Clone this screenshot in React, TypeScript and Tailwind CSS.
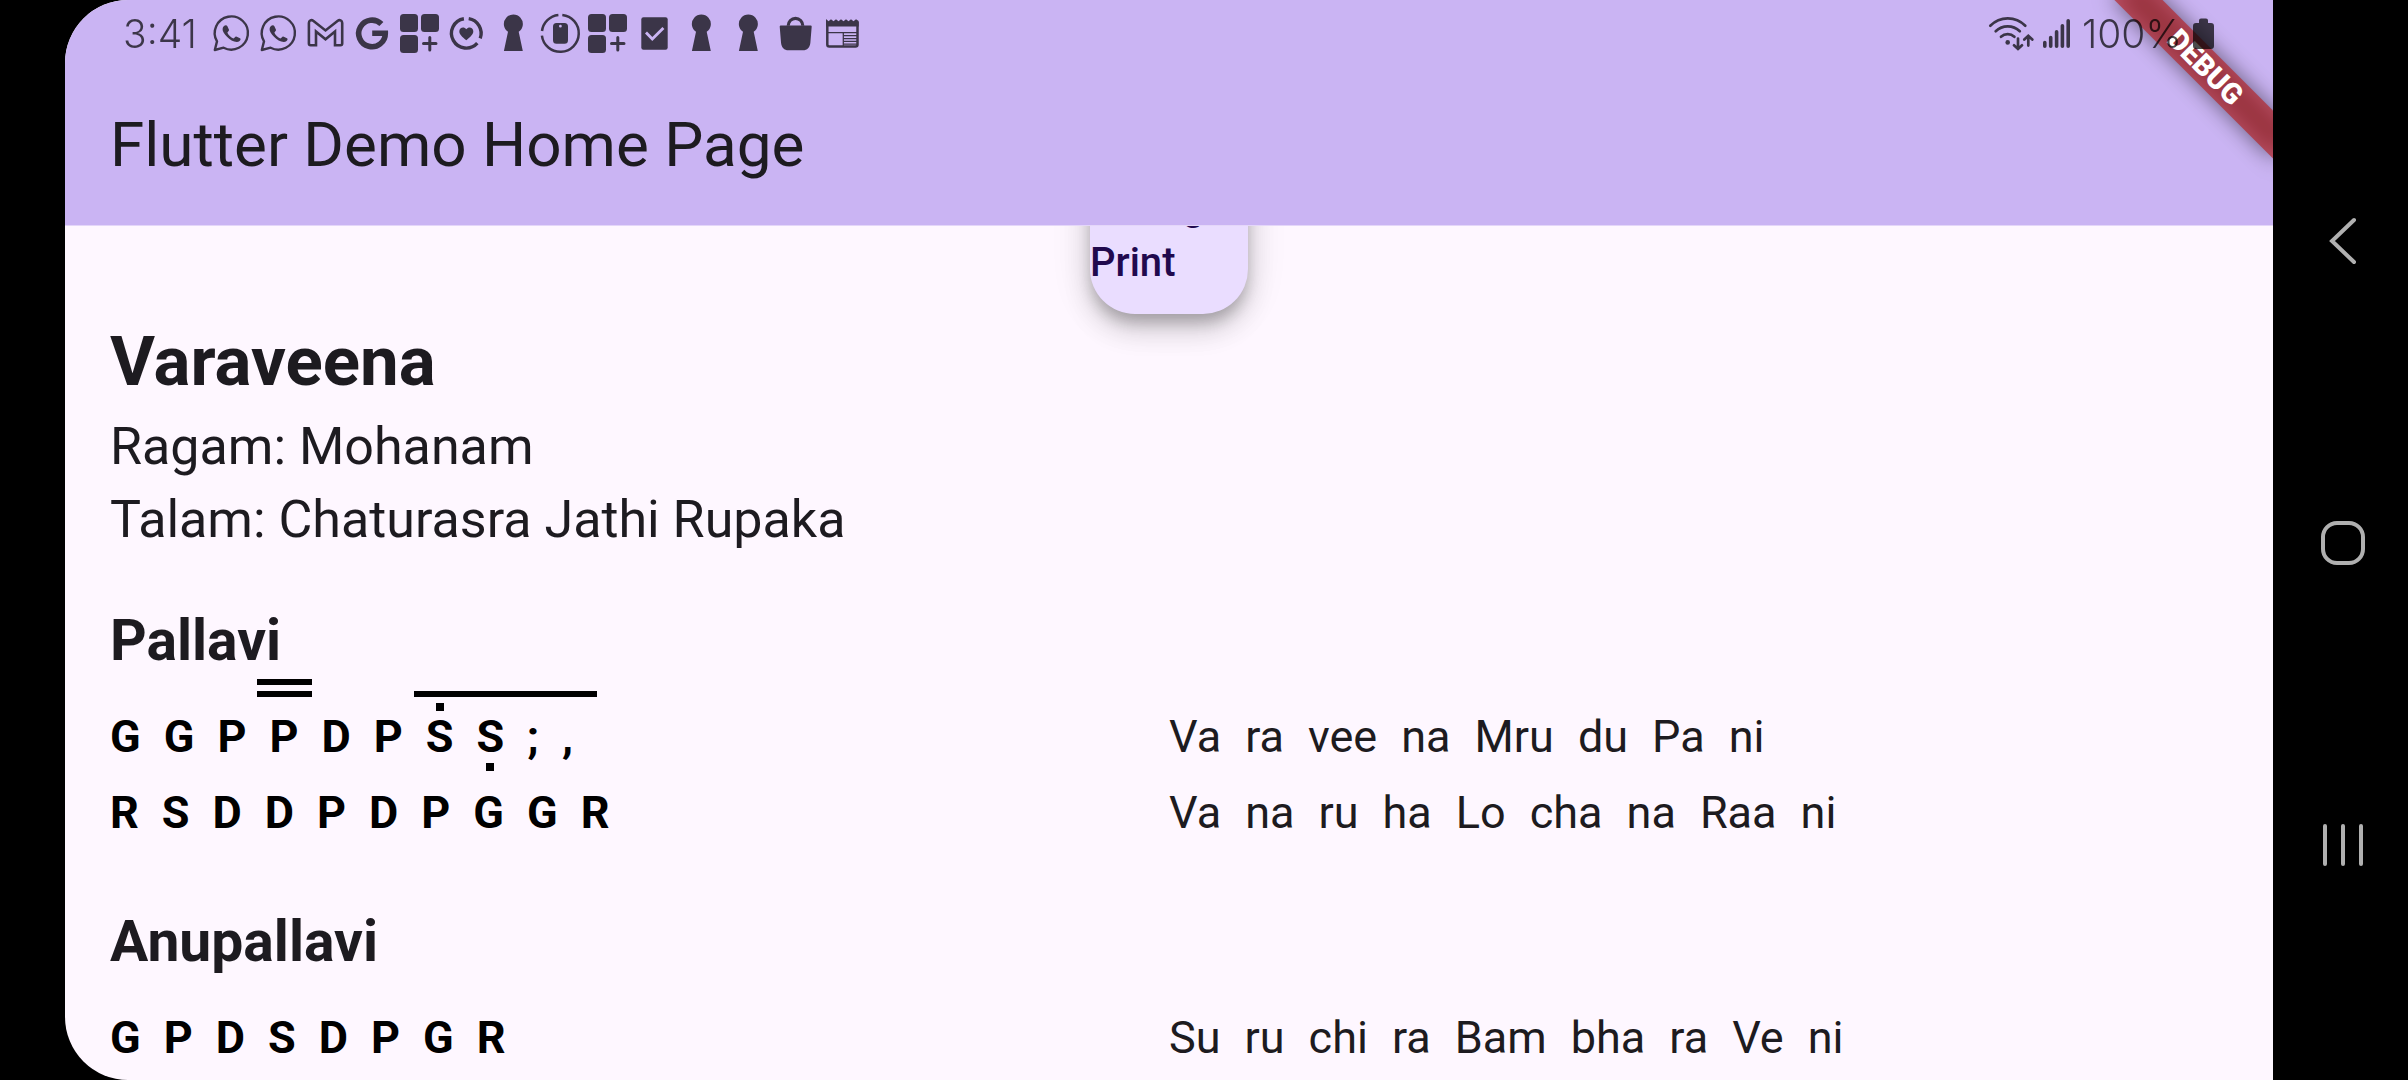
import type { ReactNode } from 'react';

function StatusIcon({ label, children }: { label: string; children: ReactNode }) {
  return (
    <svg viewBox="0 0 47 47" className="size-[47px]" fill="currentColor" role="img" aria-label={label}>
      {children}
    </svg>
  );
}

const WhatsApp = () => (
  <StatusIcon label="WhatsApp">
    <path
      d="M6.8 40 L9 31.4 A16.6 16.6 0 1 1 15.6 37.7 Z"
      fill="none"
      stroke="currentColor"
      strokeWidth="2.4"
      strokeLinejoin="round"
    />
    <path d="M16 16 C17.2 14.9 18.8 15 19.4 16.2 L21 19.8 C21.4 20.7 19.6 22 19.4 22.8 C20.4 25.2 22.8 27.4 25.4 28.4 C26.4 28.2 27.2 26.2 28.2 26.4 L32 28.2 C33 28.8 32.6 30.2 31.6 31 C29.6 32.6 26.4 31.8 23.6 30.4 C20.2 28.6 17.4 25.6 15.6 22.6 C14.2 20 14.2 17.6 16 16 Z" />
  </StatusIcon>
);

const Gmail = () => (
  <StatusIcon label="Gmail">
    <path
      d="M8.6 35.2 A1.7 1.7 0 0 1 6.9 33.5 V13 C6.9 10.2 9.4 9.4 11.2 10.8 L23.5 20.4 L35.8 10.8 C37.6 9.4 40.2 10.2 40.2 13 V33.5 A1.7 1.7 0 0 1 38.5 35.2 H33 V21.4 L23.5 29.2 L14 21.4 V35.2 Z"
      fill="none"
      stroke="currentColor"
      strokeWidth="2.6"
    />
  </StatusIcon>
);

const Google = () => (
  <StatusIcon label="Google">
    <path
      d="M32.4 14 A13.3 13.3 0 1 0 36.3 23.2 H23.2"
      fill="none"
      stroke="currentColor"
      strokeWidth="5.6"
    />
  </StatusIcon>
);

const Widgets = () => (
  <StatusIcon label="Widgets">
    <rect x="4" y="4" width="18" height="18" rx="3.5" />
    <rect x="25" y="4" width="18" height="18" rx="3.5" />
    <rect x="4" y="25" width="18" height="18" rx="3.5" />
    <path d="M33.8 27.5 V40 M27.5 33.6 H40" stroke="currentColor" strokeWidth="3" strokeLinecap="round" />
  </StatusIcon>
);

const Health = () => (
  <StatusIcon label="Health">
    <path
      d="M25.7 8.6 A14.8 14.8 0 0 1 37.2 28.4 M34.3 33.2 A14.8 14.8 0 1 1 20.9 8.7"
      fill="none"
      stroke="currentColor"
      strokeWidth="3.4"
    />
    <path d="M23.3 30.2 C19 26.8 16.3 24.4 16.3 21.3 C16.3 17.4 21 16 23.3 19.2 C25.6 16 30.3 17.4 30.3 21.3 C30.3 24.4 27.6 26.8 23.3 30.2 Z" />
  </StatusIcon>
);

const Keyhole = () => (
  <StatusIcon label="Keyhole">
    <path d="M18 21.8 A9.5 9.5 0 1 1 28.7 21.8 L32.8 41 H13.9 Z" />
  </StatusIcon>
);

const DeviceCare = () => (
  <StatusIcon label="Device care">
    <path
      d="M25.3 4.9 A18.5 18.5 0 1 1 4.9 25.6 M5 21 A18.5 18.5 0 0 1 21.4 4.9"
      fill="none"
      stroke="currentColor"
      strokeWidth="2.5"
    />
    <path
      fillRule="evenodd"
      d="M19.5 13 H27.5 A3.5 3.5 0 0 1 31 16.5 V30.3 A3.5 3.5 0 0 1 27.5 33.8 H19.5 A3.5 3.5 0 0 1 16 30.3 V16.5 A3.5 3.5 0 0 1 19.5 13 Z M23.4 14.8 A1.4 1.4 0 1 0 23.4 17.6 A1.4 1.4 0 1 0 23.4 14.8 Z"
    />
  </StatusIcon>
);

const Task = () => (
  <StatusIcon label="Task">
    <mask id="task-check">
      <rect width="47" height="47" fill="white" />
      <path d="M15 22.6 L21.3 29 L32.4 18" fill="none" stroke="black" strokeWidth="2.8" />
    </mask>
    <rect x="10.3" y="7.3" width="26.4" height="32.4" rx="2.2" mask="url(#task-check)" />
  </StatusIcon>
);

const Bag = () => (
  <StatusIcon label="Shopping">
    <path d="M7.7 16.4 Q7.7 15.4 8.7 15.4 H38.7 Q39.7 15.4 39.7 16.4 L38.4 32.5 C38 37.6 35.2 40.3 31 40.3 H16.5 C12.2 40.3 9.4 37.6 9 32.5 Z" />
    <path d="M16.2 15.8 A7.3 7.5 0 0 1 30.8 15.8" fill="none" stroke="currentColor" strokeWidth="3.2" />
  </StatusIcon>
);

const News = () => (
  <StatusIcon label="News">
    <path d="M7 9 L9.5 11.2 L12 9.2 L14.5 11.2 L17 9.2 L19.5 11.2 L22 9.2 L24.5 11.2 L27 9.2 L29.5 11.2 L32 9.2 L34.5 11.2 L37 9.2 L39.7 11 V16.4 H7 Z" />
    <path
      d="M8.3 12 V34.6 Q8.3 36.6 10.3 36.6 H36.5 Q38.5 36.6 38.5 34.6 V12"
      fill="none"
      stroke="currentColor"
      strokeWidth="2.5"
    />
    <path
      d="M8 22.6 H39 M24.3 22.6 V36 M24.3 25.7 H38 M24.3 28.6 H38 M24.3 31.4 H38 M24.3 34.2 H38"
      fill="none"
      stroke="currentColor"
      strokeWidth="1.3"
    />
  </StatusIcon>
);

function StatusBar() {
  return (
    <div className="absolute inset-x-0 top-0 z-20 flex h-[67px] items-center pl-[58px] pr-[59px] text-black opacity-70">
      <time className="w-[85px] font-['Inter',sans-serif] text-[39px] leading-none font-light">3:41</time>
      <div className="flex">
        <WhatsApp />
        <WhatsApp />
        <Gmail />
        <Google />
        <Widgets />
        <Health />
        <Keyhole />
        <DeviceCare />
        <Widgets />
        <Task />
        <Keyhole />
        <Keyhole />
        <Bag />
        <News />
      </div>
      <div className="ml-auto flex items-center">
        <svg
          viewBox="0 0 46 36"
          className="h-9 w-[46px]"
          fill="none"
          stroke="currentColor"
          strokeWidth="2.7"
          strokeLinecap="round"
          role="img"
          aria-label="Wi-Fi"
        >
          <path d="M2.3 9.7 C12 -.2 27.6 -.2 37.3 9.7 M7.7 15.3 C14.4 8.6 25 8.6 31.8 15.3 M13 20.8 C16.8 17.2 22.6 17.2 26.4 20.8" />
          <path d="M30 22.5 V32.6 M26 29.3 L30 33 L34 29.3 M40.3 29.6 V20 M36.3 23.6 L40.3 19.8 L44.3 23.6" />
          <circle cx="19.7" cy="26.4" r="2.3" fill="currentColor" stroke="none" />
        </svg>
        <svg
          viewBox="0 0 28 36"
          className="ml-2 h-9 w-7"
          stroke="currentColor"
          strokeWidth="3.6"
          strokeLinecap="round"
          role="img"
          aria-label="Signal"
        >
          <path d="M2.8 26.5 V30.2 M8.7 21.5 V30.2 M14.6 15.8 V30.2 M20.4 9.8 V30.2 M26.2 4.8 V30.2" />
        </svg>
        <span className="ml-3 font-['Inter',sans-serif] text-[39px] leading-none font-light">100%</span>
        <svg viewBox="0 0 21 32" className="ml-[11px] h-8 w-[21px]" fill="currentColor" role="img" aria-label="Battery">
          <path d="M6 5 V2.5 Q6 .5 8 .5 H13 Q15 .5 15 2.5 V5 H18 Q21 5 21 8 V28 Q21 31 18 31 H3 Q0 31 0 28 V8 Q0 5 3 5 Z" />
        </svg>
      </div>
    </div>
  );
}

function DebugBanner() {
  return (
    <div className="absolute top-[50px] right-[-45px] z-20 h-[34px] w-[225px] rotate-45">
      <div className="absolute inset-0 bg-black/50 blur-[11px]" />
      <div className="relative flex h-full items-center justify-center bg-[#b71c1c]/63 text-[29px] leading-none font-black text-white">
        DEBUG
      </div>
    </div>
  );
}

type Mark = 'above' | 'below';
type Note = string | { note: string; dot: Mark };
type Group = { notes: Note[]; lines?: 1 | 2 };
type Line = { swaras: Group[]; lyrics: string };

const plain = (notes: string): Group => ({ notes: notes.split(' ') });

const sections: { name: string; lines: Line[] }[] = [
  {
    name: 'Pallavi',
    lines: [
      {
        swaras: [
          plain('G G P'),
          { notes: ['P'], lines: 2 },
          plain('D P'),
          { notes: [{ note: 'S', dot: 'above' }, { note: 'S', dot: 'below' }, ';', ','], lines: 1 },
        ],
        lyrics: 'Va ra vee na Mru du Pa ni',
      },
      { swaras: [plain('R S D D P D P G G R')], lyrics: 'Va na ru ha Lo cha na Raa ni' },
    ],
  },
  {
    name: 'Anupallavi',
    lines: [{ swaras: [plain('G P D S D P G R')], lyrics: 'Su ru chi ra Bam bha ra Ve ni' }],
  },
];

function NoteText({ value }: { value: Note }) {
  if (typeof value === 'string') return <span>{value}</span>;
  return (
    <span className="relative">
      {value.note}
      <i
        className={
          value.dot === 'above'
            ? 'absolute top-[-2px] left-1/2 -ml-1 size-2 bg-black'
            : 'absolute bottom-[-2px] left-1/2 -ml-1 size-2 bg-black'
        }
      />
    </span>
  );
}

function SwaraGroup({ group }: { group: Group }) {
  return (
    <span className="relative flex gap-[23px]">
      {group.lines && (
        <i
          className={
            group.lines === 2
              ? 'absolute -right-[14px] -left-3 top-[-26px] h-[18px] border-y-6 border-black'
              : 'absolute -right-6 -left-3 top-[-14px] h-[6px] bg-black'
          }
        />
      )}
      {group.notes.map((n, i) => (
        <NoteText key={i} value={n} />
      ))}
    </span>
  );
}

export default function App() {
  return (
    <div className="flex h-screen overflow-hidden bg-black pl-[65px] font-['Roboto',sans-serif]">
      <div className="relative flex flex-1 flex-col overflow-hidden rounded-l-[63px] bg-[#fef7ff] text-[#1d1b20]">
        <header className="relative z-10 border-b border-[#e4d6f9] bg-[#cab4f3] px-[45px] pt-[105px] pb-[40px]">
          <h1 className="text-[62px] leading-[80px]">Flutter Demo Home Page</h1>
        </header>

        <main className="-mt-[70px] px-[45px]">
          <button
            type="button"
            className="mx-auto flex size-[158px] items-center rounded-[45px] bg-[#eaddff] text-left text-[40px] leading-[56px] font-medium text-[#21094e] shadow-[0_10px_14px_-2px_rgba(0,0,0,0.2),0_17px_28px_rgba(0,0,0,0.14),0_3px_40px_rgba(0,0,0,0.12)]"
          >
            Debug Print
          </button>

          <h2 className="text-[69px] leading-[96px] font-bold">Varaveena</h2>
          <p className="text-[52px] leading-[73px]">Ragam: Mohanam</p>
          <p className="text-[52px] leading-[73px]">Talam: Chaturasra Jathi Rupaka</p>

          {sections.map((section) => (
            <section key={section.name} className="flex flex-col gap-3 pt-[45px]">
              <h3 className="mb-3 text-[57px] leading-[80px] font-bold">{section.name}</h3>
              {section.lines.map((line) => (
                <div key={line.lyrics} className="grid grid-cols-2 text-[45px] leading-[64px] last:mb-3">
                  <div className="flex gap-[23px] font-bold text-black">
                    {line.swaras.map((g, i) => (
                      <SwaraGroup key={i} group={g} />
                    ))}
                  </div>
                  <p className="flex gap-6">
                    {line.lyrics.split(' ').map((word, i) => (
                      <span key={i}>{word}</span>
                    ))}
                  </p>
                </div>
              ))}
            </section>
          ))}
        </main>

        <DebugBanner />
        <StatusBar />
      </div>

      <nav className="flex w-[135px] flex-col items-center justify-center pt-1.5 pl-1 text-[#b0b0b0]">
        <button type="button" aria-label="Back" className="flex h-[302px] w-full items-center justify-center">
          <svg viewBox="0 0 48 48" className="size-12" fill="none" stroke="currentColor" strokeWidth="4" strokeLinecap="round">
            <path d="M35 3 L13 24 L35 45" />
          </svg>
        </button>
        <button type="button" aria-label="Home" className="flex h-[302px] w-full items-center justify-center">
          <svg viewBox="0 0 48 48" className="size-12" fill="none" stroke="currentColor" strokeWidth="4">
            <rect x="4" y="4" width="40" height="40" rx="14" />
          </svg>
        </button>
        <button type="button" aria-label="Recent apps" className="flex h-[302px] w-full items-center justify-center">
          <svg viewBox="0 0 48 48" className="size-12" fill="none" stroke="currentColor" strokeWidth="4" strokeLinecap="round">
            <path d="M6 5 V43 M24 5 V43 M42 5 V43" />
          </svg>
        </button>
      </nav>
    </div>
  );
}
